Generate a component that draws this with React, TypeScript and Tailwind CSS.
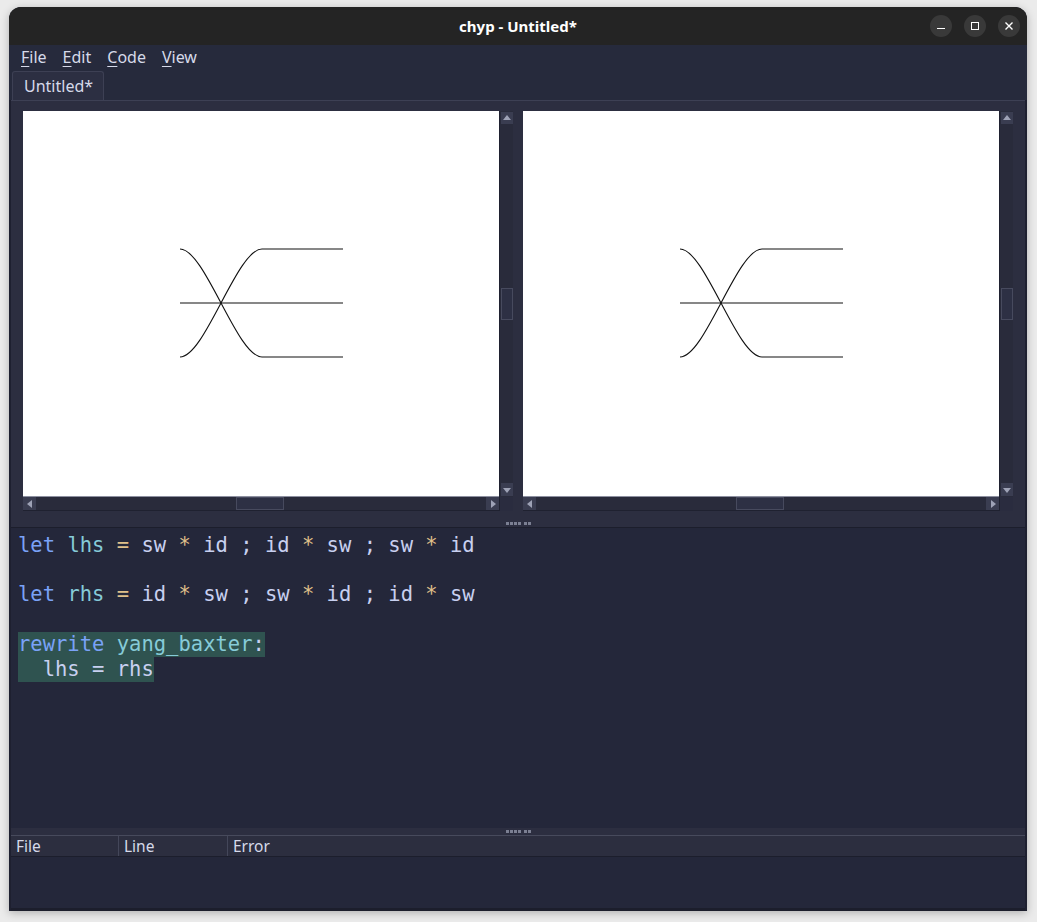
import React from "react";

const ui = { fontFamily: '"Noto Sans", "Open Sans", sans-serif' };
const mono = { fontFamily: '"DejaVu Sans Mono", "Liberation Mono", monospace' };

function Tri({ dir }: { dir: "up" | "down" | "left" | "right" }) {
  const pts =
    dir === "up"
      ? "2,8 10,8 6,3"
      : dir === "down"
      ? "2,4 10,4 6,9"
      : dir === "left"
      ? "8,2 8,10 3,6"
      : "4,2 4,10 9,6";
  return (
    <svg width="12" height="12" viewBox="0 0 12 12">
      <polygon points={pts} fill="#9ea2b6" />
    </svg>
  );
}

function Diagram() {
  return (
    <svg width="476" height="386" viewBox="0 0 476 386" className="block">
      <g fill="none" stroke="#111" strokeWidth="1.1">
        <path d="M157 138 C 182 138, 214 246, 239 246 L 320 246" />
        <path d="M157 246 C 182 246, 214 138, 239 138 L 320 138" />
        <path d="M157 192 L 320 192" />
      </g>
    </svg>
  );
}

function GraphView() {
  return (
    <div className="flex flex-col w-[490px]">
      <div className="flex">
        <div className="w-[476px] h-[386px] bg-white border-b border-[#8d90a0]">
          <Diagram />
        </div>
        <div className="w-[14px] h-[386px] bg-[#292b3b] flex flex-col items-center border-l border-[#1f2130]">
          <div className="w-[12px] h-[12px] mt-[1px] bg-[#3a3d51] flex items-center justify-center">
            <Tri dir="up" />
          </div>
          <div className="w-[12px] h-[32px] mt-[164px] bg-[#2d3044] border border-[#474a5e]" />
          <div className="flex-1" />
          <div className="w-[12px] h-[13px] mb-[1px] bg-[#3a3d51] flex items-center justify-center">
            <Tri dir="down" />
          </div>
        </div>
      </div>
      <div className="flex h-[14px]">
        <div className="w-[476px] bg-[#292b3b] flex items-center border-b border-[#1f2130]">
          <div className="w-[13px] h-[13px] bg-[#3a3d51] flex items-center justify-center">
            <Tri dir="left" />
          </div>
          <div className="w-[48px] h-[13px] ml-[200px] bg-[#2d3044] border border-[#474a5e]" />
          <div className="flex-1" />
          <div className="w-[13px] h-[13px] bg-[#3a3d51] flex items-center justify-center">
            <Tri dir="right" />
          </div>
        </div>
        <div className="w-[14px] bg-[#2a2c3f] border-l border-[#1f2130]" />
      </div>
    </div>
  );
}

function Dots() {
  return (
    <div className="flex gap-[1px]">
      <div className="w-[3px] h-[3px] bg-[#7b7f92]" />
      <div className="w-[3px] h-[3px] bg-[#7b7f92]" />
      <div className="w-[3px] h-[3px] bg-[#7b7f92]" />
      <div className="w-[3px] h-[3px] bg-[#7b7f92]" />
      <div className="w-[3px] h-[3px] bg-[#7b7f92] ml-[2px]" />
      <div className="w-[3px] h-[3px] bg-[#7b7f92]" />
    </div>
  );
}

const K = ({ c }: { c: string }) => <span className="text-[#7aa2f7]">{c}</span>;
const N = ({ c }: { c: string }) => <span className="text-[#86cbd8]">{c}</span>;
const O = ({ c }: { c: string }) => <span className="text-[#e0c08a]">{c}</span>;
const T = ({ c }: { c: string }) => <span className="text-[#c8d0f0]">{c}</span>;

export default function App() {
  return (
    <div className="w-[1037px] h-[922px] bg-[#ebebeb] pt-[7px] pl-[9px] overflow-hidden">
      <div className="w-[1018px] h-[904px] rounded-t-[12px] overflow-hidden flex flex-col bg-[#1e2030] shadow-[0_2px_8px_rgba(0,0,0,0.25)]">
        {/* Title bar */}
        <div className="h-[38px] bg-[#242424] relative flex items-center justify-center shrink-0">
          <span className="text-white font-bold text-[15px]" style={ui}>
            chyp - Untitled*
          </span>
          <div className="absolute right-[7px] top-[8px] flex gap-[12px]">
            <div className="w-[22px] h-[22px] rounded-full bg-[#393939] flex items-center justify-center">
              <div className="w-[8px] h-[1.5px] bg-white mt-[5px]" />
            </div>
            <div className="w-[22px] h-[22px] rounded-full bg-[#393939] flex items-center justify-center">
              <div className="w-[8px] h-[8px] border-[1.5px] border-white" />
            </div>
            <div className="w-[22px] h-[22px] rounded-full bg-[#393939] flex items-center justify-center">
              <svg width="10" height="10" viewBox="0 0 10 10">
                <path d="M1.5 1.5 L8.5 8.5 M8.5 1.5 L1.5 8.5" stroke="white" strokeWidth="1.4" />
              </svg>
            </div>
          </div>
        </div>
        {/* Menu bar */}
        <div
          className="h-[24px] bg-[#262a3c] flex items-center pl-[12px] gap-[16px] text-[16px] text-[#d6daea] shrink-0"
          style={ui}
        >
          <span><span className="underline underline-offset-[3px]">F</span>ile</span>
          <span><span className="underline underline-offset-[3px]">E</span>dit</span>
          <span><span className="underline underline-offset-[3px]">C</span>ode</span>
          <span><span className="underline underline-offset-[3px]">V</span>iew</span>
        </div>
        {/* Tab bar */}
        <div className="h-[31px] bg-[#262a3c] flex items-end pl-[3px] shrink-0">
          <div
            className="h-[29px] w-[92px] bg-[#2c2f42] border border-b-0 border-[#3d4054] rounded-t-[3px] flex items-center pl-[11px] text-[16px] text-[#d6daea]"
            style={ui}
          >
            Untitled*
          </div>
        </div>
        {/* Panel */}
        <div className="flex-1 mx-[2px] flex flex-col border-t border-[#3d4054] bg-[#2c2e40]">
          <div className="flex pl-[12px] pt-[10px] gap-[10px]">
            <GraphView />
            <GraphView />
          </div>
          <div className="h-[16px] flex items-center justify-center pt-[9px]">
            <Dots />
          </div>
          <div
            className="h-[301px] bg-[#24273a] border-t border-[#1c1e2c] pt-[5px] pl-[7px] text-[20.5px] leading-[24.6px] whitespace-pre"
            style={mono}
          >
            <div>
              <K c="let" /> <N c="lhs" /> <O c="=" /> <T c="sw" /> <O c="*" /> <T c="id" /> <T c=";" /> <T c="id" />{" "}
              <O c="*" /> <T c="sw" /> <T c=";" /> <T c="sw" /> <O c="*" /> <T c="id" />
            </div>
            <div> </div>
            <div>
              <K c="let" /> <N c="rhs" /> <O c="=" /> <T c="id" /> <O c="*" /> <T c="sw" /> <T c=";" /> <T c="sw" />{" "}
              <O c="*" /> <T c="id" /> <T c=";" /> <T c="id" /> <O c="*" /> <T c="sw" />
            </div>
            <div> </div>
            <div className="mt-[1px]">
              <span className="bg-[#2f5350] inline-block">
                <K c="rewrite" /> <N c="yang_baxter" />
                <T c=":" />
              </span>
            </div>
            <div>
              <span className="bg-[#2f5350] inline-block">
                {"  "}
                <T c="lhs" /> <T c="=" /> <T c="rhs" />
              </span>
            </div>
          </div>
          <div className="h-[8px] flex items-center justify-center border-b border-[#474a5c]">
            <Dots />
          </div>
          <div
            className="h-[21px] flex text-[15.5px] text-[#d6daea] bg-[#2c2e3f] border-b border-[#1c1e2c]"
            style={ui}
          >
            <div className="w-[108px] pl-[5px] border-r border-[#44475a] leading-[20px]">File</div>
            <div className="w-[109px] pl-[5px] border-r border-[#44475a] leading-[20px]">Line</div>
            <div className="flex-1 pl-[5px] leading-[20px]">Error</div>
          </div>
          <div className="flex-1 bg-[#24273a] border-b-[3px] border-[#1c1e2c]" />
        </div>
      </div>
    </div>
  );
}
